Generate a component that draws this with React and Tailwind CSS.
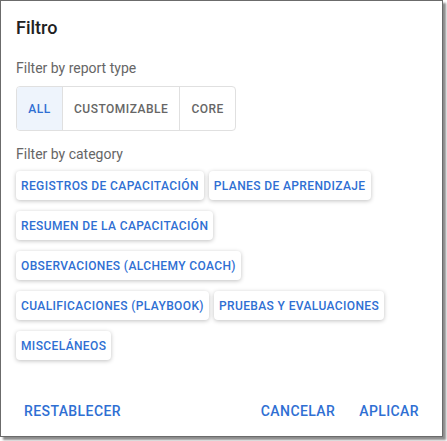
const categories = [
  ["REGISTROS DE CAPACITACIÓN", "PLANES DE APRENDIZAJE"],
  ["RESUMEN DE LA CAPACITACIÓN"],
  ["OBSERVACIONES (ALCHEMY COACH)"],
  ["CUALIFICACIONES (PLAYBOOK)", "PRUEBAS Y EVALUACIONES"],
  ["MISCELÁNEOS"],
];

const types = ["ALL", "CUSTOMIZABLE", "CORE"];

export default function App() {
  return (
    <div className="w-[447px] h-[441px] bg-white font-['Roboto',sans-serif]">
      <div className="w-[443px] h-[437px] border border-[#6b6b6b] bg-white shadow-[3px_3px_2px_rgba(0,0,0,0.45)] flex flex-col">
        <h2 className="text-[18px] font-medium text-[#212121] pl-[15px] pt-[16px] leading-[22px]">Filtro</h2>

        <div className="px-[15px] pt-[19px] flex-1">
          <p className="text-[14px] text-[#666] leading-[20px]">Filter by report type</p>
          <div className="mt-[8px] inline-flex h-[45px] border border-[#e0e0e0] rounded-[4px] overflow-hidden">
            {types.map((t, i) => (
              <button
                key={t}
                className={
                  "text-[12px] font-medium tracking-[0.5px] px-[11px] " +
                  (i === 0 ? "bg-[#eef4fc] text-[#2f6fd3] w-[45px]" : "text-[#666]") +
                  (i > 0 ? " border-l border-[#e0e0e0]" : "")
                }
              >
                {t}
              </button>
            ))}
          </div>

          <p className="text-[14px] text-[#666] leading-[20px] mt-[13px]">Filter by category</p>
          <div className="mt-[7px] flex flex-col gap-[11px]">
            {categories.map((row, r) => (
              <div key={r} className="flex gap-[5px]">
                {row.map(c => (
                  <button
                    key={c}
                    className="h-[29px] px-[5px] bg-white rounded-[4px] text-[12px] font-medium tracking-[0.38px] text-[#2f6fd3] shadow-[0_1px_4px_rgba(0,0,0,0.25)] whitespace-nowrap"
                  >
                    {c}
                  </button>
                ))}
              </div>
            ))}
          </div>
        </div>

        <div className="flex items-center h-[46px] mb-[2px] px-[23px] text-[14px] font-medium tracking-[0.4px] text-[#2f6fd3]">
          <button>RESTABLECER</button>
          <div className="flex-1" />
          <button>CANCELAR</button>
          <button className="ml-[24px]">APLICAR</button>
        </div>
      </div>
    </div>
  );
}
